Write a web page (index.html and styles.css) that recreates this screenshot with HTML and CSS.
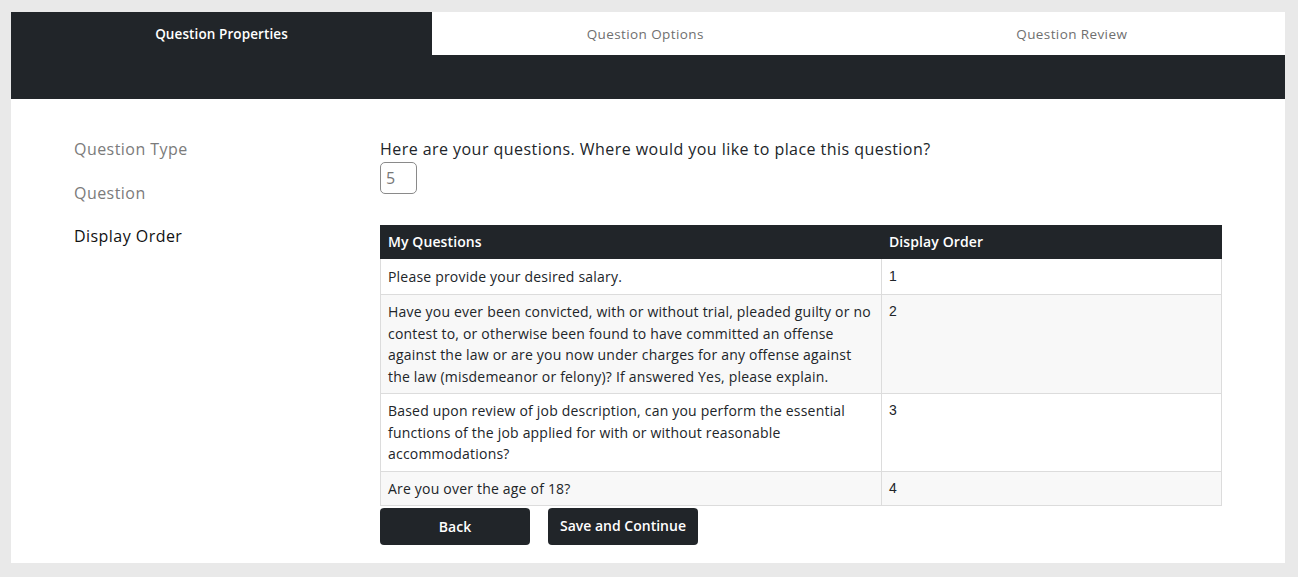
FILE: index.html
```html
<!DOCTYPE html>
<html>
  <head>
    <meta charset="utf-8">
    <title>Question Properties</title>
    <link rel="stylesheet" href="styles.css">
  </head>
  <body>
    <div class="card">
      <div class="tabs">
        <div class="tab active">Question Properties</div>
        <div class="tab">Question Options</div>
        <div class="tab">Question Review</div>
      </div>
      <div class="band"></div>

      <div class="content">
        <ul class="steps">
          <li>Question Type</li>
          <li>Question</li>
          <li class="current">Display Order</li>
        </ul>

        <div class="main">
          <p class="prompt">Here are your questions. Where would you like to place this question?</p>
          <input type="text" class="order-input" value="5">

          <table class="questions">
            <thead>
              <tr>
                <th class="col-q">My Questions</th>
                <th>Display Order</th>
              </tr>
            </thead>
            <tbody>
              <tr>
                <td>Please provide your desired salary.</td>
                <td class="num">1</td>
              </tr>
              <tr>
                <td>Have you ever been convicted, with or without trial, pleaded guilty or no contest to, or otherwise been found to have committed an offense against the law or are you now under charges for any offense against the law (misdemeanor or felony)? If answered Yes, please explain.</td>
                <td class="num">2</td>
              </tr>
              <tr>
                <td>Based upon review of job description, can you perform the essential functions of the job applied for with or without reasonable accommodations?</td>
                <td class="num">3</td>
              </tr>
              <tr>
                <td>Are you over the age of 18?</td>
                <td class="num">4</td>
              </tr>
            </tbody>
          </table>

          <div class="actions">
            <button class="btn">Back</button>
            <button class="btn btn-save">Save and Continue</button>
          </div>
        </div>
      </div>
    </div>
  </body>
</html>
```

FILE: styles.css
```css
body {
  margin: 0;
  padding: 12px 13px 14px 11px;
  background: #e9e9e9;
  font-family: "Open Sans", "Liberation Sans", sans-serif;
  color: #212529;
}

.card {
  background: #fff;
}

.tabs {
  display: flex;
  height: 43px;
}

.tab {
  flex: 1;
  display: flex;
  align-items: center;
  justify-content: center;
  font-size: 13.5px;
  letter-spacing: 0.4px;
  color: #6f6f6f;
}

.tab.active {
  flex: 0 0 421px;
  background: #212529;
  color: #fff;
  font-weight: 600;
  letter-spacing: 0.1px;
}

.band {
  height: 44px;
  background: #212529;
}

.content {
  display: grid;
  grid-template-columns: 306px 842px;
  padding: 39px 63px 18px 63px;
}

.steps {
  list-style: none;
  margin: 0;
  padding: 0;
}

.steps li {
  font-size: 16px;
  line-height: 22px;
  color: #7b7b7b;
  margin-bottom: 21.5px;
  letter-spacing: 0.45px;
}

.steps li.current {
  color: #111;
}

.prompt {
  margin: 0 0 2px;
  font-size: 16px;
  line-height: 22px;
  letter-spacing: 0.45px;
}

.order-input {
  display: block;
  box-sizing: border-box;
  width: 37px;
  height: 32px;
  padding: 0 5px;
  border: 1px solid #8a8a8a;
  border-radius: 5px;
  font-family: inherit;
  font-size: 16px;
  color: #777;
}

.questions {
  width: 100%;
  margin-top: 31px;
  border-collapse: collapse;
  font-size: 14px;
  line-height: 21.5px;
  letter-spacing: 0.2px;
}

.questions th {
  background: #212529;
  color: #fff;
  text-align: left;
  font-weight: 600;
  padding: 5px 7px;
  border: 1px solid #212529;
  letter-spacing: 0.1px;
}

.questions th.col-q {
  width: 486px;
}

.questions td {
  vertical-align: top;
  padding: 6px 7px;
  border: 1px solid #dcdcdc;
}

.questions tbody tr:first-child td {
  padding: 7px 7px;
}

.questions tbody tr:nth-child(even) td {
  background: #f8f8f8;
}

.questions td.num {
  font-family: "Liberation Sans", Arial, sans-serif;
  font-size: 14px;
  letter-spacing: 0;
}

.actions {
  display: flex;
  gap: 18px;
  margin-top: 2px;
}

.btn {
  width: 150px;
  height: 37px;
  border: none;
  border-radius: 4px;
  background: #212529;
  color: #fff;
  font-family: inherit;
  font-size: 14px;
  font-weight: 600;
}

.btn-save {
  padding-bottom: 3px;
}
```
